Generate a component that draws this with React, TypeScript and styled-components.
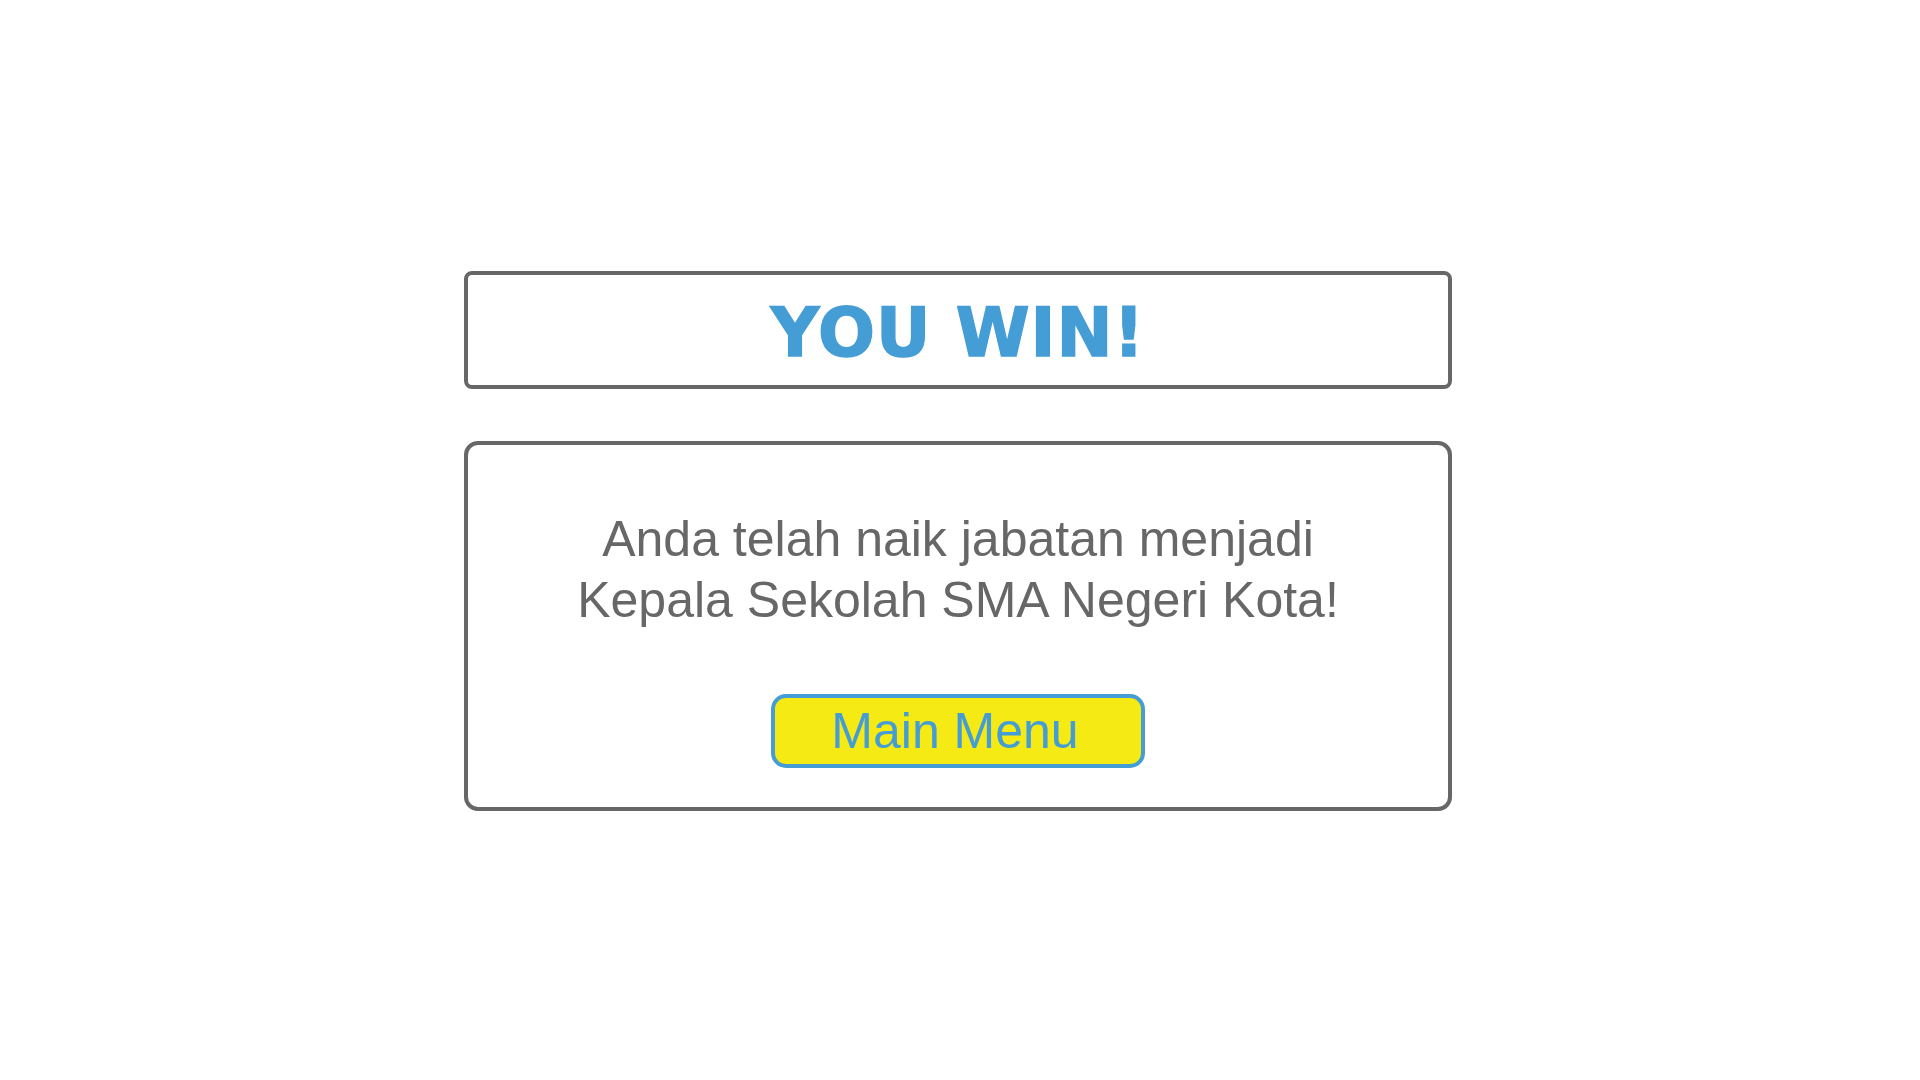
import React from "react";
import styled, { createGlobalStyle } from "styled-components";

const GlobalStyle = createGlobalStyle`
  html, body {
    margin: 0;
    padding: 0;
    background: #ffffff;
  }
  body {
    font-family: "Liberation Sans", Arial, sans-serif;
  }
`;

const Page = styled.main`
  width: 1920px;
  height: 1080px;
  box-sizing: border-box;
  padding: 271px 4px 0 0;
  display: flex;
  flex-direction: column;
  align-items: center;
  gap: 52px;
`;

const TitleBox = styled.section`
  width: 988px;
  height: 118px;
  box-sizing: border-box;
  border: 4px solid #676767;
  border-radius: 8px;
  display: flex;
  align-items: center;
  justify-content: center;
  padding-top: 7px;
`;

const Title = styled.h1`
  margin: 0;
  font-family: "DejaVu Sans", Verdana, sans-serif;
  font-weight: 700;
  font-size: 67px;
  line-height: 1;
  color: #459dd6;
  letter-spacing: 1px;
  -webkit-text-stroke: 1.5px #459dd6;
`;

const MessageBox = styled.section`
  width: 988px;
  height: 370px;
  box-sizing: border-box;
  border: 4px solid #676767;
  border-radius: 14px;
  padding-top: 64px;
  display: flex;
  flex-direction: column;
  align-items: center;
  gap: 63px;
`;

const Message = styled.p`
  margin: 0;
  font-family: "Liberation Sans", Arial, sans-serif;
  font-size: 50px;
  line-height: 61px;
  color: #676767;
  text-align: center;
`;

const MenuButton = styled.button`
  width: 374px;
  height: 74px;
  box-sizing: border-box;
  border: 4px solid #459dd6;
  border-radius: 15px;
  background: #f5ea14;
  color: #459dd6;
  font-family: "Liberation Sans", Arial, sans-serif;
  font-size: 50px;
  line-height: 1;
  display: flex;
  align-items: center;
  justify-content: center;
  padding: 0 6px 0 0;
  cursor: pointer;
`;

export default function App() {
  return (
    <>
      <GlobalStyle />
      <Page>
        <TitleBox>
          <Title>YOU WIN!</Title>
        </TitleBox>
        <MessageBox>
          <Message>
            Anda telah naik jabatan menjadi
            <br />
            Kepala Sekolah SMA Negeri Kota!
          </Message>
          <MenuButton>Main Menu</MenuButton>
        </MessageBox>
      </Page>
    </>
  );
}
